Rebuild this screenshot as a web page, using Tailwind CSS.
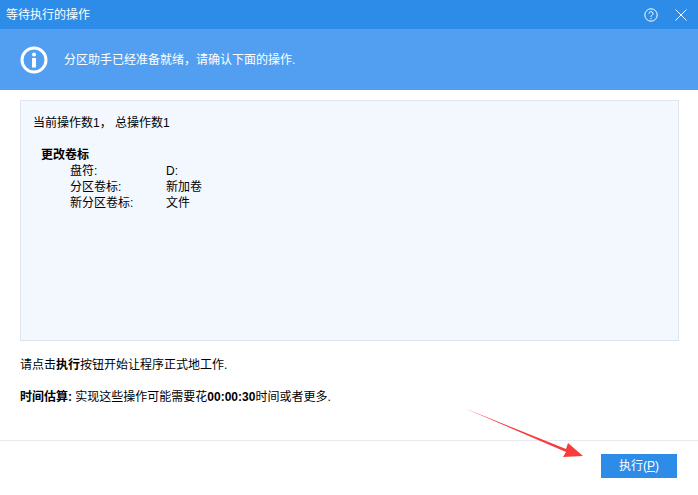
<!DOCTYPE html>
<html lang="zh">
<head>
  <meta charset="UTF-8">
  <title>等待执行的操作</title>
  <script src="https://cdn.jsdelivr.net/npm/@tailwindcss/browser@4"></script>
</head>
<body class="relative w-[698px] h-[495px] overflow-hidden bg-white flex flex-col text-[12px] leading-[16px] text-black font-['Liberation_Sans','Noto_Sans_CJK_SC',sans-serif]">

<!-- title bar -->
<header class="h-[29px] shrink-0 bg-[#2d8ce8] text-white flex items-center pl-[6px] pr-[11px]">
  <h1 class="text-[12px] font-normal">等待执行的操作</h1>
  <svg class="ml-auto" width="14" height="14" viewBox="0 0 14 14" fill="none" stroke="#fff">
    <circle cx="7" cy="7" r="6.2"/>
    <path d="M5 5.6a2 2 0 1 1 3 1.7c-.7.4-1 .8-1 1.5"/>
    <path d="M7 10v1.2"/>
  </svg>
  <svg class="ml-[17px]" width="12" height="12" viewBox="0 0 12 12" fill="none" stroke="#fff">
    <path d="M.5.5l11 11M11.500 .5l-11 11"/>
  </svg>
</header>

<!-- banner -->
<section class="h-[61px] shrink-0 bg-[#529ff2] text-white flex items-center pl-[20px]">
  <svg width="28" height="28" viewBox="0 0 28 28">
    <circle cx="14" cy="14" r="12" fill="none" stroke="#fff" stroke-width="3"/>
    <circle cx="14" cy="8.500" r="2" fill="#fff"/>
    <rect x="12" y="12" width="4" height="9.500" fill="#fff"/>
  </svg>
  <p class="ml-[16px]">分区助手已经准备就绪，请确认下面的操作.</p>
</section>

<!-- operations list -->
<main class="mt-[10px] mx-[19px] ml-[20px] h-[241px] shrink-0 bg-[#f3f7fe] border border-[#dfe5f0] px-[12px] pt-[14px]">
  <p>当前操作数1， 总操作数1</p>
  <h2 class="mt-[16px] ml-[8px] font-bold">更改卷标</h2>
  <dl class="ml-[37px] grid grid-cols-[96px_1fr]">
    <dt>盘符:</dt><dd>D:</dd>
    <dt>分区卷标:</dt><dd>新加卷</dd>
    <dt>新分区卷标:</dt><dd>文件</dd>
  </dl>
</main>

<p class="mt-[16px] ml-[20px]">请点击<b>执行</b>按钮开始让程序正式地工作.</p>
<p class="mt-[16px] ml-[20px]"><b>时间估算:</b> 实现这些操作可能需要花<b>00:00:30</b>时间或者更多.</p>

<!-- footer -->
<footer class="mt-[35px] border-t border-[#e8e8ee] h-[53px] flex justify-end pt-[13px] pr-[21px]">
  <button class="w-[76px] h-[24px] bg-[#2d8ce8] text-white text-[12px]">执行(<span class="underline">P</span>)</button>
</footer>

<!-- red annotation arrow -->
<svg class="absolute left-0 top-0 pointer-events-none" width="698" height="495" viewBox="0 0 698 495">
  <path d="M464 408L566 449L568 443L583 456L563 457L566 452Z" fill="#f63c3c"/>
</svg>

</body>
</html>
